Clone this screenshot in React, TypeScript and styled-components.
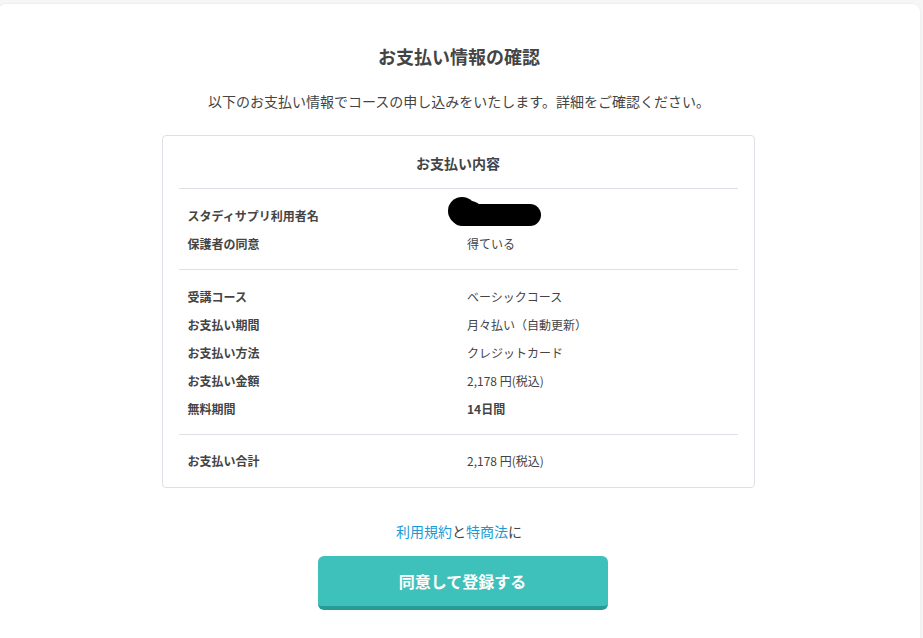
import React from "react";
import styled, { createGlobalStyle } from "styled-components";

const GlobalStyle = createGlobalStyle`
  html, body {
    margin: 0;
    padding: 0;
    background: #f6f6f6;
    overflow: hidden;
  }
  body {
    font-family: "Noto Sans CJK JP", "Noto Sans", sans-serif;
    color: #444;
  }
`;

const Page = styled.div`
  padding-top: 4px;
  height: 638px;
  box-sizing: border-box;
  display: flex;
  flex-direction: column;
`;

const Card = styled.main`
  flex: 1;
  margin: 0 3px 0 -2px;
  background: #fff;
  border-radius: 8px 8px 0 0;
  box-shadow: 0 0 3px rgba(0, 0, 0, 0.06);
  padding-top: 39px;
  display: flex;
  flex-direction: column;
  align-items: center;
`;

const Title = styled.h1`
  margin: 0;
  font-size: 18px;
  line-height: 26px;
  font-weight: 700;
  color: #444;
`;

const Lead = styled.p`
  margin: 22px 0 0;
  font-size: 14px;
  line-height: 20px;
  color: #444;
`;

const Box = styled.section`
  box-sizing: border-box;
  margin: 24px 0 0 -2px;
  width: 593px;
  border: 1px solid #dde1e5;
  border-radius: 4px;
  padding: 0 16px;
`;

const BoxHeader = styled.div`
  height: 52px;
  display: flex;
  align-items: center;
  justify-content: center;
  font-size: 14px;
  font-weight: 700;
  color: #444;
  padding-top: 1px;
  box-sizing: border-box;
`;

const Section = styled.div<{ $top: number; $bottom: number }>`
  border-top: 1px solid #dde1e5;
  padding: ${(p) => p.$top}px 0 ${(p) => p.$bottom}px;
`;

const Row = styled.div`
  display: grid;
  grid-template-columns: 1fr 1fr;
  height: 28px;
  align-items: center;
  font-size: 12px;
`;

const Label = styled.div`
  padding: 0 9px;
  font-weight: 700;
  color: #444;
`;

const Value = styled.div<{ $bold?: boolean }>`
  padding: 0 9px;
  position: relative;
  height: 100%;
  display: flex;
  align-items: center;
  font-weight: ${(p) => (p.$bold ? 700 : 400)};
  color: #444;
`;

const Redact = styled.svg`
  position: absolute;
  left: -12px;
  top: -6px;
`;

const Terms = styled.p`
  margin: 33px 0 0;
  font-size: 14px;
  line-height: 20px;
  color: #444;
`;

const Link = styled.a`
  color: #1a9ad6;
  text-decoration: none;
`;

const Submit = styled.button`
  margin: 15px 0 0 7px;
  width: 290px;
  height: 54px;
  border: none;
  border-bottom: 4px solid #279c96;
  border-radius: 6px;
  background: #3fc1bb;
  color: #fff;
  font-family: "Noto Sans CJK JP", "Noto Sans", sans-serif;
  font-size: 16px;
  font-weight: 700;
  padding: 0;
  cursor: pointer;
`;

type Item = { label: string; value: React.ReactNode; bold?: boolean; redacted?: boolean };

const sections: { top: number; bottom: number; items: Item[] }[] = [
  {
    top: 12,
    bottom: 12,
    items: [
      { label: "スタディサプリ利用者名", value: "", redacted: true },
      { label: "保護者の同意", value: "得ている" },
    ],
  },
  {
    top: 12,
    bottom: 12,
    items: [
      { label: "受講コース", value: "ベーシックコース" },
      { label: "お支払い期間", value: "月々払い（自動更新）" },
      { label: "お支払い方法", value: "クレジットカード" },
      { label: "お支払い金額", value: "2,178 円(税込)" },
      { label: "無料期間", value: "14日間", bold: true },
    ],
  },
  {
    top: 11,
    bottom: 13,
    items: [{ label: "お支払い合計", value: "2,178 円(税込)" }],
  },
];

export default function App() {
  return (
    <>
      <GlobalStyle />
      <Page>
        <Card>
          <Title>お支払い情報の確認</Title>
          <Lead>以下のお支払い情報でコースの申し込みをいたします。詳細をご確認ください。</Lead>
          <Box>
            <BoxHeader>お支払い内容</BoxHeader>
            {sections.map((s, i) => (
              <Section key={i} $top={s.top} $bottom={s.bottom}>
                {s.items.map((it) => (
                  <Row key={it.label}>
                    <Label>{it.label}</Label>
                    <Value $bold={it.bold}>
                      {it.redacted ? (
                        <Redact width="100" height="36" viewBox="0 0 100 36">
                          <circle cx="16" cy="16" r="14" fill="#000" />
                          <line x1="16" y1="20" x2="84" y2="20" stroke="#000" strokeWidth="22" strokeLinecap="round" />
                          <path d="M16 6 Q 28 4 34 10 L 40 12 L 40 30 L 16 30 Z" fill="#000" />
                        </Redact>
                      ) : (
                        it.value
                      )}
                    </Value>
                  </Row>
                ))}
              </Section>
            ))}
          </Box>
          <Terms>
            <Link href="#">利用規約</Link>と<Link href="#">特商法</Link>に
          </Terms>
          <Submit>同意して登録する</Submit>
        </Card>
      </Page>
    </>
  );
}
